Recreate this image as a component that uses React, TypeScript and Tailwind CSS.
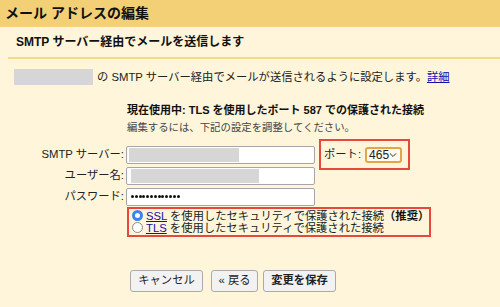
import React from 'react';

const font = "font-['Liberation_Sans','Noto_Sans_CJK_JP',sans-serif]";

const Field: React.FC<{ label: string; children: React.ReactNode; extra?: React.ReactNode }> = ({ label, children, extra }) => (
  <div className="flex items-center h-[18px]">
    <div className="w-[126px] pr-[2px] text-right text-[11.3px] text-[#222]">{label}</div>
    <div className="w-[189px] h-[18px] bg-white border border-[#a6a6a6] rounded-[2px] flex items-center px-[2px]">
      {children}
    </div>
    {extra}
  </div>
);

const Radio: React.FC<{ checked?: boolean }> = ({ checked }) =>
  checked ? (
    <span className="w-[11px] h-[11px] rounded-full border-[3px] border-[#3b82f6] bg-white shrink-0" />
  ) : (
    <span className="w-[11px] h-[11px] rounded-full border border-[#8a8a8a] bg-white shrink-0" />
  );

const App: React.FC = () => {
  const dots = Array.from({ length: 13 });
  return (
    <div className={`w-[500px] h-[307px] bg-[#fef5db] text-[#222] overflow-hidden ${font}`}>
      {/* Title */}
      <div className="h-[27px] bg-[#f3d075] pl-[5px] flex items-center">
        <h1 className="text-[14px] font-bold text-[#111]">メール アドレスの編集</h1>
      </div>

      {/* Subtitle */}
      <div className="ml-[8px] h-[32px] pl-[8px] flex items-center border-b-2 border-[#f5d98a]">
        <h2 className="text-[12px] font-bold text-[#111]">SMTP サーバー経由でメールを送信します</h2>
      </div>

      {/* Intro */}
      <div className="mt-[10px] pl-[14px] flex items-center text-[11.3px] whitespace-nowrap">
        <div className="w-[79px] h-[16px] bg-[#d6d6d6]" />
        <span className="ml-[4px]">
          の SMTP サーバー経由でメールが送信されるように設定します。
          <a className="text-[#1a0dab] underline">詳細</a>
        </span>
      </div>

      {/* Current status */}
      <div className="pl-[127px] mt-[16px] whitespace-nowrap">
        <div className="text-[11px] font-bold text-[#111] leading-[16px]">
          現在使用中: TLS を使用したポート 587 での保護された接続
        </div>
        <div className="text-[10.4px] text-[#444] leading-[14px] mt-[3px]">
          編集するには、下記の設定を調整してください。
        </div>
      </div>

      {/* Form */}
      <div className="mt-[11px] flex flex-col gap-[3px]">
        <Field
          label="SMTP サーバー:"
          extra={
            <div className="ml-[4px] -my-[7px] w-[91px] h-[31px] border-2 border-[#e8483c] flex items-center pl-[3px]">
              <span className="text-[11.3px]">ポート:</span>
              <div className="ml-[4px] w-[37px] h-[16px] border-2 border-[#e3a54a] rounded-[3px] bg-[#fffaf0] flex items-center justify-between pl-[2px] pr-[3px]">
                <span className="text-[12px] leading-none">465</span>
                <svg width="8" height="6" viewBox="0 0 8 6" fill="none">
                  <path d="M1 1.5 L4 4.5 L7 1.5" stroke="#333" strokeWidth="1" />
                </svg>
              </div>
            </div>
          }
        >
          <div className="w-[110px] h-[14px] bg-[#d6d6d6]" />
        </Field>
        <Field label="ユーザー名:">
          <div className="ml-[2px] w-[128px] h-[14px] bg-[#d6d6d6]" />
        </Field>
        <Field label="パスワード:">
          <div className="ml-[2px] flex items-center gap-[0.8px]">
            {dots.map((_, i) => (
              <span key={i} className="w-[3px] h-[3px] rounded-full bg-[#111]" />
            ))}
          </div>
        </Field>
      </div>

      {/* Security */}
      <div className="ml-[127px] mt-[1px] w-[304px] h-[30px] border-2 border-[#e8483c] flex flex-col justify-center pl-[3px] text-[11.3px] leading-[12px] whitespace-nowrap">
        <label className="flex items-center gap-[3px]">
          <Radio checked />
          <span>
            <a className="text-[#1a0dab] underline">SSL</a> を使用したセキュリティで保護された接続
            <b className="text-[#111]">（推奨）</b>
          </span>
        </label>
        <label className="flex items-center gap-[3px]">
          <Radio />
          <span>
            <a className="text-[#1a0dab] underline">TLS</a> を使用したセキュリティで保護された接続
          </span>
        </label>
      </div>

      {/* Buttons */}
      <div className="mt-[33px] ml-[130px] flex items-center text-[11.3px]">
        <button className="w-[73px] h-[22px] bg-[#f2f2f2] border border-[#aaa] rounded-[3px]">キャンセル</button>
        <button className="ml-[8px] w-[47px] h-[22px] bg-[#f2f2f2] border border-[#aaa] rounded-[3px]">« 戻る</button>
        <button className="ml-[5px] w-[73px] h-[22px] bg-[#f2f2f2] border border-[#aaa] rounded-[3px] font-bold">変更を保存</button>
      </div>
    </div>
  );
};

export default App;
